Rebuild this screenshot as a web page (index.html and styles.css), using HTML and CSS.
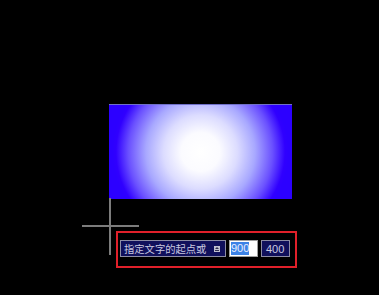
FILE: index.html
```html
<!DOCTYPE html>
<html>
<head>
<meta charset="utf-8">
<link rel="stylesheet" href="styles.css">
</head>
<body>
<div class="canvas">
  <div class="shape"></div>
  <div class="cross-v"></div>
  <div class="cross-h"></div>
  <div class="prompt">
    <div class="field field-text">
      <span class="label">指定文字的起点或</span>
      <span class="arrow-btn"><svg width="6" height="6" viewBox="0 0 6 6"><path d="M3 1 L5 3 H1 Z M1 4 H5 V5 H1 Z" fill="#303050"/></svg></span>
    </div>
    <div class="field field-active"><span class="sel">900</span></div>
    <div class="field field-num">400</div>
  </div>
</div>
</body>
</html>
```
FILE: styles.css
```css
html, body {
  margin: 0;
  padding: 0;
  background: #000;
}
.canvas {
  position: relative;
  width: 379px;
  height: 295px;
  background: #000;
  overflow: hidden;
}
.shape {
  position: absolute;
  left: 109px;
  top: 104px;
  width: 183px;
  height: 95px;
  box-sizing: border-box;
  border-top: 1px solid #7070c8;
  background: radial-gradient(circle 88px at 50% 50%, #ffffff 0%, #fbfbff 22%, #dcdcff 42%, #a8a8ff 62%, #6a50ff 82%, #3000ff 96%, #2c00ff 100%);
}
.cross-v {
  position: absolute;
  left: 109px;
  top: 198px;
  width: 2px;
  height: 57px;
  background: #7c7c7c;
}
.cross-h {
  position: absolute;
  left: 82px;
  top: 225px;
  width: 57px;
  height: 2px;
  background: #7c7c7c;
}
.prompt {
  position: absolute;
  left: 116px;
  top: 231px;
  border: 2px solid #e0202a;
  display: flex;
  align-items: flex-start;
  gap: 3px;
  padding: 7px 0 0 2px;
  box-sizing: content-box;
  width: 175px;
  height: 26px;
}
.field {
  height: 17px;
  box-sizing: border-box;
  border: 1px solid #8c8ca4;
  background: #10105c;
  color: #c8c8e0;
  display: flex;
  align-items: center;
  font-family: "Liberation Sans", Arial, sans-serif;
  font-size: 11px;
}
.field-text {
  width: 106px;
  padding: 0 4px 0 3px;
  justify-content: space-between;
}
.label {
  font-family: "Noto Sans CJK SC", "Noto Sans", sans-serif;
  font-size: 10.3px;
  line-height: 15px;
  white-space: nowrap;
}
.arrow-btn {
  width: 6px;
  height: 6px;
  background: #c0c0d0;
  display: flex;
  margin-right: 1px;
}
.field-active {
  width: 29px;
  background: #ffffff;
  border-color: #a0a0a0;
  padding-left: 1px;
}
.sel {
  background: #3c82e6;
  color: #e8f0ff;
  line-height: 13px;
}
.field-num {
  width: 29px;
  padding-left: 4px;
}
```
